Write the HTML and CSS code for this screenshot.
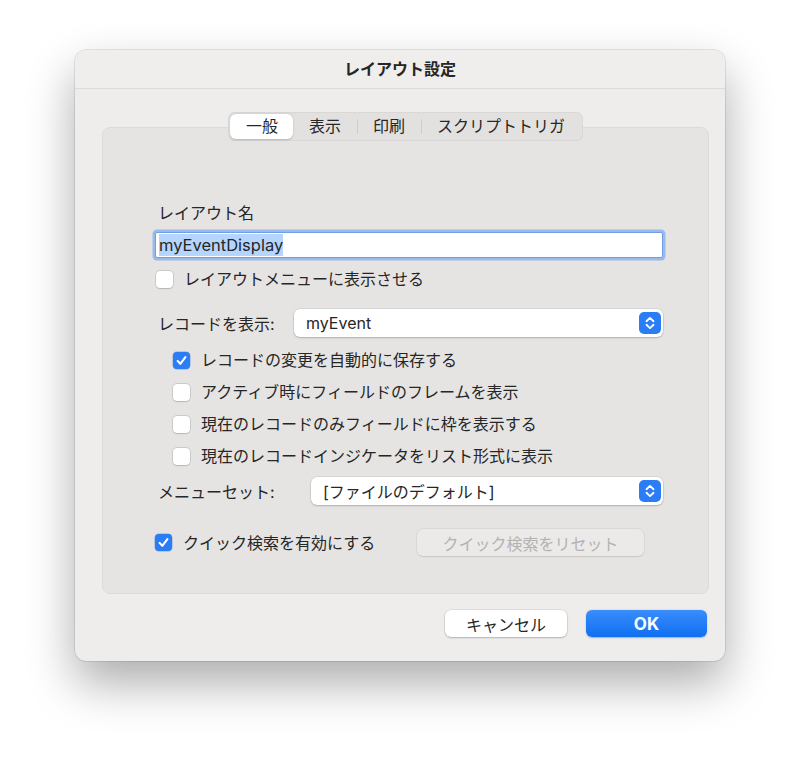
FILE: index.html
```html
<!DOCTYPE html>
<html lang="ja">
<head>
    <meta charset="UTF-8">
    <title>レイアウト設定</title>
    <link rel="stylesheet" href="styles.css">
</head>
<body>
    <div class="window">
        <div class="titlebar">レイアウト設定</div>

        <div class="content">
            <div class="tabs">
                <span class="tab active">一般</span>
                <span class="tab">表示</span>
                <span class="tab-sep"></span>
                <span class="tab">印刷</span>
                <span class="tab-sep"></span>
                <span class="tab">スクリプトトリガ</span>
            </div>

            <div class="panel">
                <div class="label">レイアウト名</div>
                <div class="field"><span class="selection">myEventDisplay</span></div>

                <div class="check-row menu-check">
                    <span class="box"></span>
                    <span>レイアウトメニューに表示させる</span>
                </div>

                <div class="popup-row record-row">
                    <span class="popup-label">レコードを表示:</span>
                    <div class="popup">
                        <span>myEvent</span>
                        <svg class="stepper" width="22" height="22" viewBox="0 0 22 22">
                            <rect width="22" height="22" rx="5" fill="#2b7df5"/>
                            <path d="M7.5 9.2 L11 5.9 L14.5 9.2 M7.5 12.8 L11 16.1 L14.5 12.8" fill="none" stroke="#fff" stroke-width="1.9" stroke-linecap="round" stroke-linejoin="round"/>
                        </svg>
                    </div>
                </div>

                <!-- record options -->
                <div class="sub-checks">
                    <div class="check-row">
                        <span class="box checked">
                            <svg width="17" height="17" viewBox="0 0 17 17"><path d="M4.6 8.9 L7.3 11.8 L12.4 5.2" fill="none" stroke="#fff" stroke-width="2.1" stroke-linecap="round" stroke-linejoin="round"/></svg>
                        </span>
                        <span>レコードの変更を自動的に保存する</span>
                    </div>
                    <div class="check-row">
                        <span class="box"></span>
                        <span>アクティブ時にフィールドのフレームを表示</span>
                    </div>
                    <div class="check-row">
                        <span class="box"></span>
                        <span>現在のレコードのみフィールドに枠を表示する</span>
                    </div>
                    <div class="check-row">
                        <span class="box"></span>
                        <span>現在のレコードインジケータをリスト形式に表示</span>
                    </div>
                </div>

                <div class="popup-row menuset-row">
                    <span class="popup-label">メニューセット:</span>
                    <div class="popup">
                        <span>[ファイルのデフォルト]</span>
                        <svg class="stepper" width="22" height="22" viewBox="0 0 22 22">
                            <rect width="22" height="22" rx="5" fill="#2b7df5"/>
                            <path d="M7.5 9.2 L11 5.9 L14.5 9.2 M7.5 12.8 L11 16.1 L14.5 12.8" fill="none" stroke="#fff" stroke-width="1.9" stroke-linecap="round" stroke-linejoin="round"/>
                        </svg>
                    </div>
                </div>

                <div class="quick-row">
                    <div class="check-row quick-check">
                        <span class="box checked">
                            <svg width="17" height="17" viewBox="0 0 17 17"><path d="M4.6 8.9 L7.3 11.8 L12.4 5.2" fill="none" stroke="#fff" stroke-width="2.1" stroke-linecap="round" stroke-linejoin="round"/></svg>
                        </span>
                        <span>クイック検索を有効にする</span>
                    </div>
                    <button class="btn reset-btn" disabled>クイック検索をリセット</button>
                </div>
            </div>
        </div>

        <div class="footer">
            <button class="btn cancel-btn">キャンセル</button>
            <button class="btn ok-btn">OK</button>
        </div>
    </div>
</body>
</html>
```

FILE: styles.css
```css
html {
    background: #fff;
}

body {
    margin: 0;
    padding: 50px 0 0;
    min-height: 100vh;
    box-sizing: border-box;
    background: #fff;
    font-family: Inter, "Noto Sans CJK JP", sans-serif;
    font-size: 16px;
    color: #262626;
}

.window {
    width: 650px;
    height: 611px;
    margin: 0 auto;
    background: #eeedec;
    border-radius: 11px;
    box-shadow: 0 0 0 0.5px rgba(0,0,0,0.18), 0 22px 48px rgba(0,0,0,0.33);
    display: flex;
    flex-direction: column;
    box-sizing: border-box;
    overflow: hidden;
}

.titlebar {
    height: 38px;
    line-height: 38px;
    text-align: center;
    font-weight: bold;
    font-size: 16px;
    background: #efeeed;
    border-bottom: 1px solid #dcdbda;
}

.content {
    padding: 23px 16px 0 27px;
    display: flex;
    flex-direction: column;
    align-items: center;
}

/* segmented tab bar */
.tabs {
    position: relative;
    z-index: 1;
    height: 29px;
    box-sizing: border-box;
    padding: 2px;
    margin-bottom: -14px;
    display: flex;
    align-items: center;
    background: #e2e1e0;
    border-radius: 7px;
    box-shadow: inset 0 0 0 0.5px rgba(0,0,0,0.08);
}

.tab {
    height: 25px;
    line-height: 25px;
    padding: 0 15.5px;
    border-radius: 6px;
}

.tab.active {
    background: #fff;
    box-shadow: 0 0.5px 2px rgba(0,0,0,0.2);
}

.tab-sep {
    width: 1px;
    height: 15px;
    background: #cfcecd;
}

.panel {
    align-self: stretch;
    height: 467px;
    box-sizing: border-box;
    padding: 0 45px 0 52px;
    background: #e5e4e3;
    border: 1px solid #dcdbda;
    border-radius: 8px;
    display: flex;
    flex-direction: column;
}

.label {
    margin: 75px 0 0 3px;
    line-height: 20px;
}

.field {
    margin-top: 9px;
    height: 26px;
    box-sizing: border-box;
    padding: 0 2px 0 3px;
    background: #fff;
    border: 1px solid #6e9fe8;
    box-shadow: 0 0 0 2.5px rgba(80,145,240,0.5);
    border-radius: 2px;
    display: flex;
    align-items: center;
    font-size: 16.5px;
}

.selection {
    background: #b4d5fe;
    line-height: 22px;
}

.check-row {
    display: flex;
    align-items: center;
    gap: 11px;
    height: 20px;
    line-height: 20px;
}

.box {
    width: 17px;
    height: 17px;
    flex: none;
    box-sizing: border-box;
    background: #fff;
    border-radius: 4px;
    box-shadow: 0 0 0 0.5px rgba(0,0,0,0.18), 0 0.5px 1.5px rgba(0,0,0,0.12);
    display: flex;
}

.box.checked {
    background: #2b7df5;
    box-shadow: 0 0 0 0.5px rgba(0,80,200,0.4);
}

.menu-check {
    margin: 11px 0 0 1px;
}

.popup-row {
    display: flex;
    align-items: center;
    height: 28px;
}

.record-row {
    margin-top: 20px;
}

.record-row .popup-label {
    width: 136px;
}

.menuset-row {
    margin-top: 5px;
}

.menuset-row .popup-label {
    width: 153px;
}

.popup-label {
    flex: none;
    padding-left: 3px;
}

.popup {
    flex: 1;
    height: 28px;
    box-sizing: border-box;
    padding: 0 2px 0 12px;
    background: #fff;
    border-radius: 6px;
    box-shadow: 0 0 0 0.5px rgba(0,0,0,0.12), 0 1px 2px rgba(0,0,0,0.18);
    display: flex;
    align-items: center;
    justify-content: space-between;
}

.sub-checks {
    margin: 7px 0 0 18px;
    display: flex;
    flex-direction: column;
}

.sub-checks .check-row {
    height: 32px;
}

.quick-row {
    margin-top: 24px;
    display: flex;
    align-items: center;
    height: 27px;
}

.quick-check {
    width: 262px;
}

.btn {
    height: 27px;
    border: none;
    border-radius: 6px;
    font-family: inherit;
    font-size: 16px;
    padding: 0;
}

.reset-btn {
    width: 227px;
    background: #ebeae9;
    color: #b3b2b1;
    box-shadow: 0 0 0 0.5px rgba(0,0,0,0.06), 0 0.5px 1.5px rgba(0,0,0,0.1);
}

.footer {
    display: flex;
    justify-content: flex-end;
    gap: 19px;
    padding: 16px 18px 24px;
}

.cancel-btn {
    width: 122px;
    background: #fff;
    color: #262626;
    box-shadow: 0 0 0 0.5px rgba(0,0,0,0.12), 0 1px 2px rgba(0,0,0,0.2);
}

.ok-btn {
    width: 121px;
    background: linear-gradient(#3a8dfb, #0f6ff1);
    color: #fff;
    font-weight: bold;
    font-size: 17px;
    box-shadow: 0 0.5px 1.5px rgba(0,60,180,0.35);
}
```
